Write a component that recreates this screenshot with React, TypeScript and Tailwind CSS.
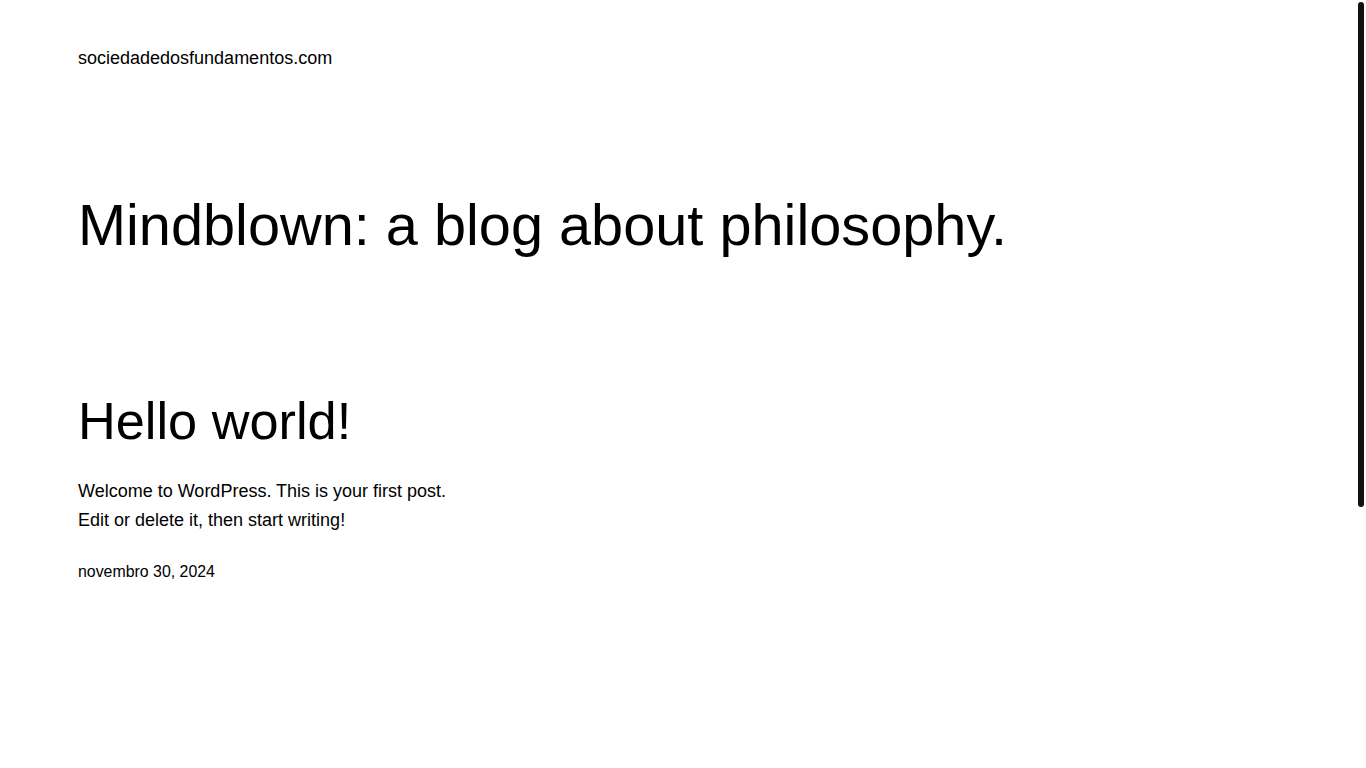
import React from 'react';

function App() {
  return (
    <div className="relative min-h-screen bg-white text-black font-['Liberation_Sans',Arial,sans-serif]">
      {/* scrollbar thumb drawn over the page */}
      <div className="fixed right-[2px] top-[2px] w-[6px] h-[505px] rounded-full bg-[#111111]" />

      <div className="px-[78px] pt-[45px] pb-[40px]">
        <header>
          <a href="#" className="text-[18px] leading-[27px]">
            sociedadedosfundamentos.com
          </a>
        </header>

        <main>
          <h1 className="mt-[119px] text-[57.7px] leading-[68px] font-normal">
            Mindblown: a blog about philosophy.
          </h1>

          <article className="mt-[131px] max-w-[390px]">
            <h2 className="text-[52.3px] leading-[62px] font-normal">
              <a href="#">Hello world!</a>
            </h2>
            <p className="mt-[25px] text-[18px] leading-[29px]">
              Welcome to WordPress. This is your first post. Edit or delete it, then start writing!
            </p>
            <div className="mt-[25px] text-[15.9px] leading-[24px]">
              <time>novembro 30, 2024</time>
            </div>
          </article>
        </main>
      </div>
    </div>
  );
}

export default App;
